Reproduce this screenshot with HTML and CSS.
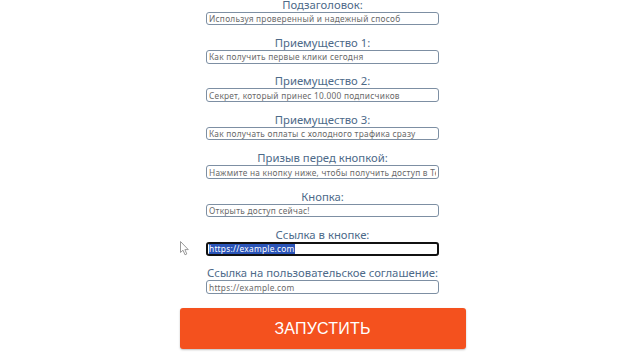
FILE: index.html
```html
<!DOCTYPE html>
<html lang="ru">
<head>
<meta charset="utf-8">
<link rel="stylesheet" href="styles.css">
</head>
<body>
<div class="page">
  <form class="form">
    <div class="field">
      <label class="label">Подзаголовок:</label>
      <input class="input" type="text" value="Используя проверенный и надежный способ">
    </div>
    <div class="field">
      <label class="label">Приемущество 1:</label>
      <input class="input" type="text" value="Как получить первые клики сегодня">
    </div>
    <div class="field">
      <label class="label">Приемущество 2:</label>
      <input class="input" type="text" value="Секрет, который принес 10.000 подписчиков">
    </div>
    <div class="field">
      <label class="label">Приемущество 3:</label>
      <input class="input" type="text" value="Как получать оплаты с холодного трафика сразу">
    </div>
    <div class="field">
      <label class="label">Призыв перед кнопкой:</label>
      <input class="input" type="text" value="Нажмите на кнопку ниже, чтобы получить доступ в Телеграм">
    </div>
    <div class="field">
      <label class="label">Кнопка:</label>
      <input class="input" type="text" value="Открыть доступ сейчас!">
    </div>
    <div class="field">
      <label class="label">Ссылка в кнопке:</label>
      <div class="input input-active"><span class="selected">https://example.com</span></div>
    </div>
    <div class="field">
      <label class="label">Ссылка на пользовательское соглашение:</label>
      <input class="input" type="text" value="https://example.com">
    </div>
    <button class="submit" type="button">ЗАПУСТИТЬ</button>
  </form>
  <svg class="cursor" width="10" height="15" viewBox="0 0 10 15">
    <path d="M0.5 0.5 L0.5 11.5 L3 9.2 L5 13.8 L6.8 13 L4.9 8.6 L8.3 8.6 Z" fill="#fff" stroke="#9a9a9a" stroke-width="1"/>
  </svg>
</div>
</body>
</html>
```
FILE: styles.css
```css
html, body {
  margin: 0;
  padding: 0;
  background: #ffffff;
}
.page {
  position: relative;
  width: 640px;
  height: 360px;
  overflow: hidden;
}
.form {
  display: flex;
  flex-direction: column;
  align-items: center;
  margin: -3.3px 0 0 0;
  padding-left: 5px;
}
.field {
  display: flex;
  flex-direction: column;
  align-items: center;
  width: 233px;
  margin-top: 9.9px;
}
.field:first-child {
  margin-top: 0;
}
.label {
  display: block;
  height: 15px;
  line-height: 15px;
  font-family: "Noto Sans", sans-serif;
  font-size: 11.3px;
  color: #4d6a89;
  white-space: nowrap;
}
.input {
  box-sizing: border-box;
  width: 233px;
  height: 13.5px;
  margin: 0;
  padding: 0 2px;
  border: 1px solid #7d8fa3;
  border-radius: 3px;
  background: #fff;
  font-family: "Noto Sans", sans-serif;
  font-size: 8.3px;
  letter-spacing: 0.25px;
  line-height: 11.5px;
  color: #6a6a6a;
  outline: none;
  overflow: hidden;
  white-space: nowrap;
}
.input-active {
  border: 2px solid #111;
  padding: 0 1px;
  line-height: 9.5px;
}
.selected {
  background: #2a54b8;
  color: #ffffff;
}
.submit {
  width: 286px;
  height: 41px;
  margin-top: 14.3px;
  border: none;
  border-radius: 3px;
  background: #f4511e;
  box-shadow: 0 1px 2px rgba(0,0,0,0.25);
  color: #ffffff;
  font-family: "Liberation Sans", Arial, sans-serif;
  font-size: 16px;
  letter-spacing: 0.2px;
  cursor: pointer;
}
.cursor {
  position: absolute;
  left: 180px;
  top: 241px;
}
```
